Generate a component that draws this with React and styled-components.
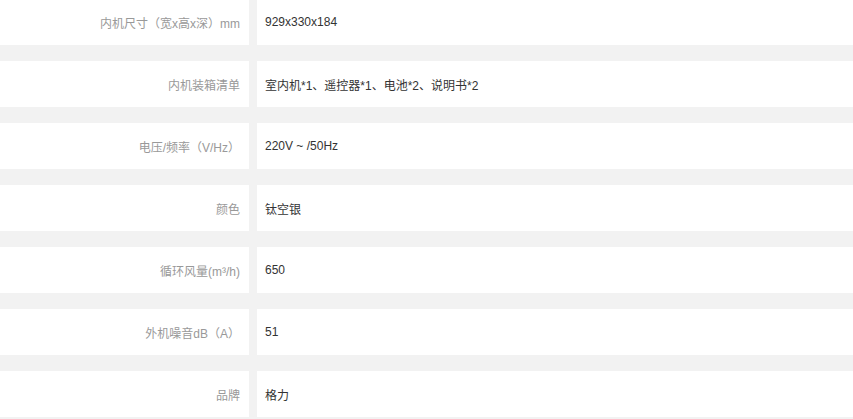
import React from 'react';
import styled, {createGlobalStyle} from "styled-components";

const GlobalStyle = createGlobalStyle`
  html, body {
    margin: 0;
    padding: 0;
    background: #f2f2f2;
  }
  body {
    font-family: "Liberation Sans", "Noto Sans CJK SC", Arial, sans-serif;
    font-size: 12px;
  }
`

const Table = styled.div`
  display: flex;
  flex-direction: column;
  gap: 16px;
  margin-top: -1px;
  background: #f2f2f2;
`
const Row = styled.div`
  display: grid;
  grid-template-columns: 249px 1fr;
  column-gap: 8px;
  height: 46px;
`
const Cell = styled.div`
  display: flex;
  align-items: center;
  background: #fff;
  white-space: nowrap;
`
const Label = styled(Cell)`
  justify-content: flex-end;
  padding-right: 9px;
  color: #999;
`
const Value = styled(Cell)`
  padding-left: 8px;
  color: #333;
`

const specs = [
    {label: "内机尺寸（宽x高x深）mm", value: "929x330x184"},
    {label: "内机装箱清单", value: "室内机*1、遥控器*1、电池*2、说明书*2"},
    {label: "电压/频率（V/Hz）", value: "220V ~ /50Hz"},
    {label: "颜色", value: "钛空银"},
    {label: "循环风量(m³/h)", value: "650"},
    {label: "外机噪音dB（A）", value: "51"},
    {label: "品牌", value: "格力"},
];

const App = () => {
    return (
        <>
            <GlobalStyle/>
            <Table>
                {specs.map((item) => (
                    <Row key={item.label}>
                        <Label>{item.label}</Label>
                        <Value>{item.value}</Value>
                    </Row>
                ))}
            </Table>
        </>
    );
};

export default App;
